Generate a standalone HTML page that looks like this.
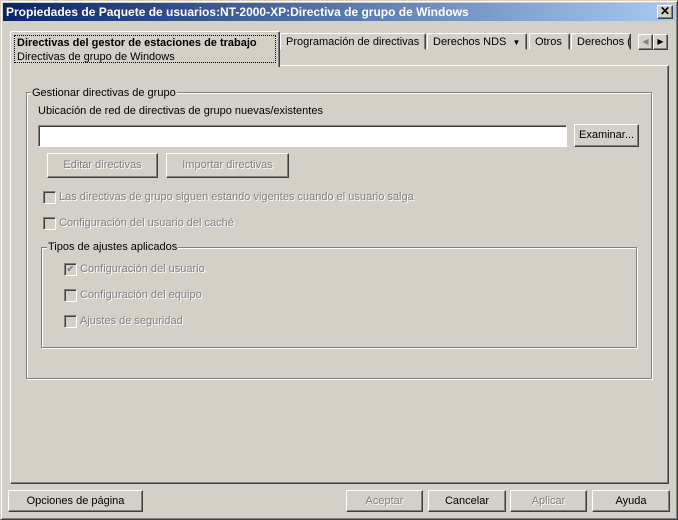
<!DOCTYPE html>
<html><head><meta charset="utf-8"><style>
*{box-sizing:border-box}
body{margin:0;width:678px;height:520px;background:#d4d0c8;font:11px "Liberation Sans",sans-serif;color:#000;position:relative;overflow:hidden}
.a{position:absolute}
.win{left:0;top:0;width:678px;height:520px;border:1px solid;border-color:#d4d0c8 #404040 #404040 #d4d0c8;box-shadow:inset 1px 1px 0 #fff,inset -1px -1px 0 #808080}
.title{left:3px;top:3px;width:672px;height:18px;background:linear-gradient(90deg,#0a246a,#a6caf0);color:#fff;font-weight:bold;font-size:12px;line-height:18px;padding-left:3px}
.btn{border:1px solid;border-color:#fff #404040 #404040 #fff;box-shadow:inset -1px -1px 0 #808080;background:#d4d0c8;text-align:center;font-size:11px}
.dis{color:#808080;text-shadow:1px 1px 0 #fff}
.tab{border:1px solid;border-color:#fff #404040 transparent #fff;box-shadow:inset -1px 0 0 #808080;border-radius:2px 2px 0 0;padding:3px 5px;height:17px;line-height:11px;white-space:nowrap;overflow:hidden;background:#d4d0c8}
.grp{border:1px solid #808080;box-shadow:1px 1px 0 #fff,inset 1px 1px 0 #fff}
.glab{background:#d4d0c8;padding:0 1px;line-height:12px}
.cb{width:13px;height:13px;border:1px solid;border-color:#808080 #fff #fff #808080;box-shadow:inset 1px 1px 0 #404040,inset -1px -1px 0 #d4d0c8;background:#d4d0c8}
</style></head><body>
<div class="a win"></div>
<div class="a title">Propiedades de Paquete de usuarios:NT-2000-XP:Directiva de grupo de Windows</div>
<div class="a btn" style="left:657px;top:5px;width:16px;height:14px;line-height:11px;font-weight:bold;font-size:12px">✕</div>

<div class="a" style="left:10px;top:65px;width:659px;height:419px;border:1px solid;border-color:#fff #404040 #404040 #fff;box-shadow:inset -1px -1px 0 #808080"></div>

<div class="a tab" style="left:280px;top:33px;width:146px">Programación de directivas</div>
<div class="a tab" style="left:427px;top:33px;width:100px">Derechos NDS &nbsp;<span style="font-size:8px">▼</span></div>
<div class="a tab" style="left:529px;top:33px;width:41px">Otros</div>
<div class="a tab" style="left:571px;top:33px;width:60px">Derechos (</div>
<div class="a btn" style="left:638px;top:34px;width:15px;height:16px;line-height:14px;font-size:8px;color:#808080">◀</div>
<div class="a btn" style="left:653px;top:34px;width:15px;height:16px;line-height:14px;font-size:8px">▶</div>
<div class="a tab" style="left:10px;top:31px;width:270px;height:36px;border-bottom:none;padding:4px 5px;line-height:14px">
<div style="border:1px dotted #000;height:28px;padding:0 2px;margin:-1px -2px"><b>Directivas del gestor de estaciones de trabajo</b><br>Directivas de grupo de Windows</div></div>

<div class="a grp" style="left:26px;top:92px;width:626px;height:287px"></div>
<div class="a glab" style="left:31px;top:87px">Gestionar directivas de grupo</div>
<div class="a" style="left:38px;top:105px">Ubicación de red de directivas de grupo nuevas/existentes</div>
<div class="a" style="left:38px;top:125px;width:529px;height:22px;background:#fff;border:1px solid;border-color:#808080 #fff #fff #808080;box-shadow:inset 1px 1px 0 #404040"></div>
<div class="a btn" style="left:574px;top:124px;width:65px;height:23px;line-height:21px">Examinar...</div>
<div class="a btn dis" style="left:47px;top:153px;width:111px;height:25px;line-height:23px">Editar directivas</div>
<div class="a btn dis" style="left:166px;top:153px;width:123px;height:25px;line-height:23px">Importar directivas</div>
<div class="a cb" style="left:43px;top:191px"></div>
<div class="a dis" style="left:59px;top:191px">Las directivas de grupo siguen estando vigentes cuando el usuario salga</div>
<div class="a cb" style="left:43px;top:217px"></div>
<div class="a dis" style="left:59px;top:217px">Configuración del usuario del caché</div>

<div class="a grp" style="left:41px;top:247px;width:596px;height:101px"></div>
<div class="a glab" style="left:47px;top:241px">Tipos de ajustes aplicados</div>
<div class="a cb" style="left:64px;top:263px;color:#808080;font-size:10px;line-height:11px;text-align:center">✔</div>
<div class="a dis" style="left:80px;top:263px">Configuración del usuario</div>
<div class="a cb" style="left:64px;top:289px"></div>
<div class="a dis" style="left:80px;top:289px">Configuración del equipo</div>
<div class="a cb" style="left:64px;top:315px"></div>
<div class="a dis" style="left:80px;top:315px">Ajustes de seguridad</div>

<div class="a btn" style="left:8px;top:490px;width:135px;height:22px;line-height:20px">Opciones de página</div>
<div class="a btn dis" style="left:346px;top:490px;width:77px;height:22px;line-height:20px">Aceptar</div>
<div class="a btn" style="left:428px;top:490px;width:78px;height:22px;line-height:20px">Cancelar</div>
<div class="a btn dis" style="left:510px;top:490px;width:77px;height:22px;line-height:20px">Aplicar</div>
<div class="a btn" style="left:592px;top:490px;width:78px;height:22px;line-height:20px">Ayuda</div>
</body></html>
